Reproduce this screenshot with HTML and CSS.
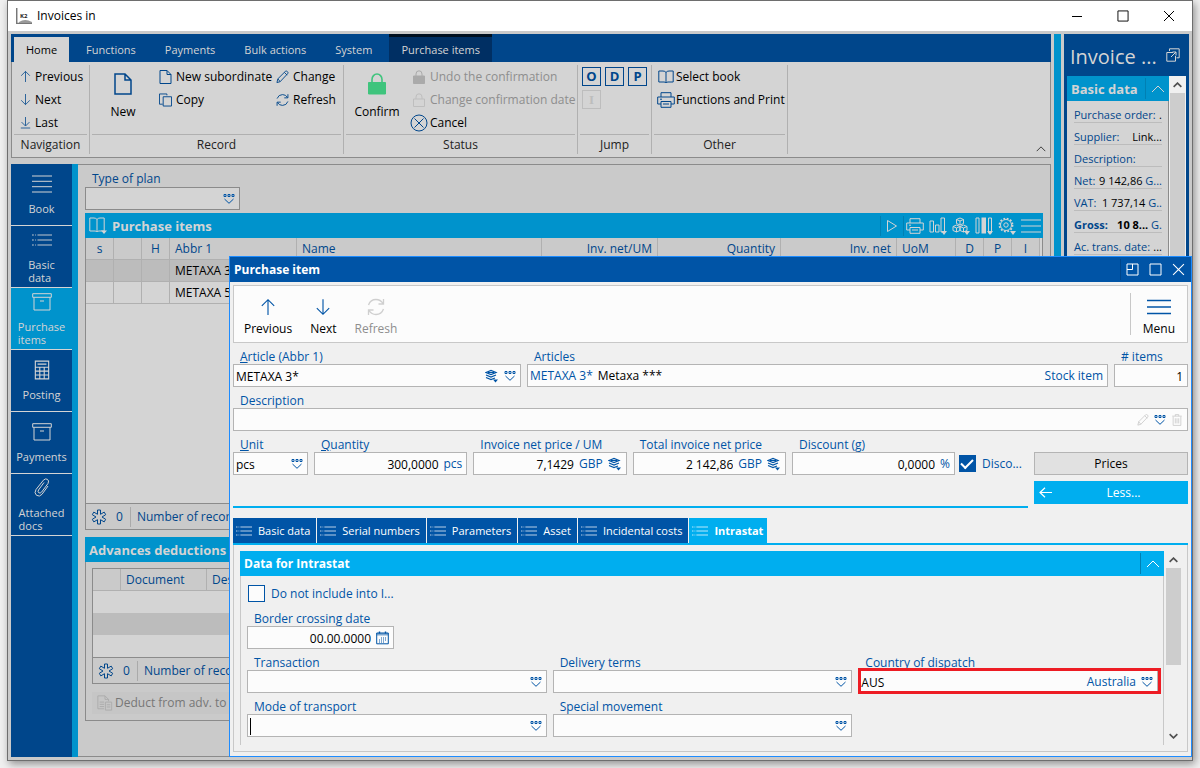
FILE: index.html
```html
<!DOCTYPE html>
<html lang="en">
<head>
<meta charset="utf-8">
<title>Invoices in</title>
<link rel="stylesheet" href="styles.css">
</head>
<body>
<svg class="sprite" aria-hidden="true">
  <symbol id="up" viewBox="0 0 14 16"><path d="M7 15V1.500M1.500 7 7 1.500 12.500 7"/></symbol>
  <symbol id="down" viewBox="0 0 14 16"><path d="M7 1v13.500M1.500 9 7 14.500 12.500 9"/></symbol>
  <symbol id="last" viewBox="0 0 14 16"><path d="M7 1v11M2 7.500l5 5 5-5M1 15h12"/></symbol>
  <symbol id="page" viewBox="0 0 18 22"><path d="M1 1h10l6 6v14H1zM11 1v6h6" stroke-width="1.500"/></symbol>
  <symbol id="pageS" viewBox="0 0 12 14"><path d="M.5.5h7l4 4v9H.5zM7.500.5v4h4"/></symbol>
  <symbol id="copy" viewBox="0 0 14 14"><path d="M4 11.500H.5V.5h8V2M4.500 3.500h9v10h-9z"/></symbol>
  <symbol id="pencil" viewBox="0 0 14 14"><path d="M1 13l1-4L10 1q1-1 2.300.2t.2 2.300L4.500 12zM2 9l2.500 3M9 2l3 3"/></symbol>
  <symbol id="refresh" viewBox="0 0 18 18"><path d="M1.500 7Q3.500 1.500 9 1.500q4.500 0 7 4M16.500 1v5h-5M16.500 11q-2 5.500-7.500 5.500-4.500 0-7-4M1.500 17v-5h5" stroke-width="1.300"/></symbol>
  <symbol id="lockBig" viewBox="0 0 18 22"><path d="M4 10V6.500a5 5.500 0 0 1 10 0V10" stroke-width="1.600"/><path class="fill" d="M.5 9.500h17V21H.5z"/></symbol>
  <symbol id="lock" viewBox="0 0 12 14"><path d="M3 6V4a3 3.200 0 0 1 6 0v2"/><path class="fill" d="M.5 6h11v7.500H.5z"/></symbol>
  <symbol id="lockO" viewBox="0 0 12 14"><path d="M3 6V4a3 3.200 0 0 1 6 0v2M.5 6h11v7.500H.5z"/></symbol>
  <symbol id="cancel" viewBox="0 0 18 18"><circle cx="9" cy="9" r="8"/><path d="M4.500 4.500l9 9M13.500 4.500l-9 9"/></symbol>
  <symbol id="book" viewBox="0 0 16 14"><path d="M8 2.500V13M8 2.500Q7 1 5 1H.8v11H6q1.500 0 2 1 .5-1 2-1h5.200V1H11Q9 1 8 2.500z"/></symbol>
  <symbol id="bookMenu" viewBox="0 0 18 17"><path d="M8 2.500V15M8 2.500Q7 1 5 1H.8v13H6q1.500 0 2 1 .5-1 2-1h5.200V1H11Q9 1 8 2.500z"/><path class="fill" d="M12 13.500h6l-3 3.500z" stroke="none"/></symbol>
  <symbol id="print" viewBox="0 0 18 16"><path d="M4 5V.7h10V5M4 12H.7V5h16.600v7H14M4 9.500h10v5.800H4zM6 12h6M3 7.200h2"/></symbol>
  <symbol id="drop" viewBox="0 0 12 12"><path d="M1 1.500h2v2H1zM5 1.500h2v2H5zM9 1.500h2v2H9zM1.500 6 6 10.300 10.500 6"/></symbol>
  <symbol id="layers" viewBox="0 0 14 13"><path d="M1 3l5-2 5 2-5 2zM1 5.500l5 2 5-2M1 8l5 2 4-1.500M3 3h6" stroke-width="1.200"/><path class="fill" d="M8 10h5l-2.500 3z" stroke="none"/></symbol>
  <symbol id="list" viewBox="0 0 22 14"><path d="M6 1.500h16M6 7h16M6 12.500h16M0 1.500h2M0 7h2M0 12.500h2M3.500 1.500h1M3.500 7h1M3.500 12.500h1"/></symbol>
  <symbol id="menu4" viewBox="0 0 20 18"><path d="M0 1h20M0 6.300h20M0 11.700h20M0 17h20"/></symbol>
  <symbol id="menu3" viewBox="0 0 20 14"><path d="M0 1h20M0 7h20M0 13h20"/></symbol>
  <symbol id="menuBig" viewBox="0 0 24 16"><path d="M0 1.500h24M0 8h24M0 14.500h24" stroke-width="1.400"/></symbol>
  <symbol id="box" viewBox="0 0 20 18"><path d="M.7.7h18.600v3.600H.7zM2 4.500V17h16V4.500M8 8h4"/></symbol>
  <symbol id="calc" viewBox="0 0 14 18"><path d="M1 1h12v16H1zM1 6.500h12M1 10h12M1 13.500h12M5 6.500V17M9 6.500V17M3 3.700h8"/></symbol>
  <symbol id="clip" viewBox="0 0 18 20"><path d="M11 4.500 5.500 12q-1 2 .3 2.800t2.700-.6l6.500-8.700q1.500-2.800-.6-4.200-2-1.200-4 .9L3 11.500q-2.200 3.500.5 5.800 3 2 5.500-1L15 8"/></symbol>
  <symbol id="star" viewBox="0 0 16 16"><path d="M6.500 1h3v4.300l3.700-2.200 1.500 2.600L11 8l3.700 2.300-1.500 2.600-3.700-2.200V15h-3v-4.300l-3.700 2.200-1.500-2.600L5 8 1.300 5.700l1.500-2.600 3.700 2.200z"/></symbol>
  <symbol id="play" viewBox="0 0 12 14"><path d="M1.500 1.500 10.500 7l-9 5.500z"/></symbol>
  <symbol id="bars" viewBox="0 0 18 18"><path d="M1 4h3.500v11H1zM6.500 8H10v7H6.500zM12 1h3.500v14H12z"/><path class="fill" d="M12 14h6l-3 4z" stroke="none"/></symbol>
  <symbol id="cubes" viewBox="0 0 18 18"><path d="M8 1l3.500 1.500v4L8 8 4.500 6.500v-4zM4.500 8 8 9.500v4L4.500 15 1 13.500v-4zM11.500 8 15 9.500v4L11.500 15 8 13.500v-4zM4.500 2.500 8 4l3.500-1.500M8 4v4M1 9.500 4.500 11 8 9.500 11.500 11 15 9.500M4.500 11v4M11.500 11v4"/><path class="fill" d="M12 14h6l-3 4z" stroke="none"/></symbol>
  <symbol id="columns" viewBox="0 0 18 18"><path d="M1 1h3v15H1zM13.500 1h3v15h-3z"/><path class="fill" d="M6.500 .5h4.500v16h-4.500zM12 14h6l-3 4z" stroke="none"/></symbol>
  <symbol id="gear" viewBox="0 0 18 18"><circle cx="8" cy="8" r="5.500"/><circle cx="8" cy="8" r="6.500" stroke-dasharray="1.800 1.600" stroke-width="1.800"/><circle cx="8" cy="8" r="2.200"/><path class="fill" d="M12 14h6l-3 4z" stroke="none"/></symbol>
  <symbol id="chev" viewBox="0 0 14 8"><path d="M1 7l6-6 6 6"/></symbol>
  <symbol id="ext" viewBox="0 0 14 14"><path d="M3.500 3V.8h9.700v9H10.500M7 4.500H.8v8.700h8.700V8M5 9l5-5M6.500 4H10v3.500"/></symbol>
  <symbol id="doc" viewBox="0 0 18 18"><path d="M8 15.500H1V1h8l4 4v2M9 1v4h4M3 8h5M3 10.500h5M3 13h5M9.500 8h7v9h-7zM11 11h4M11 13.500h4"/></symbol>
  <symbol id="trash" viewBox="0 0 12 14"><path d="M.5 2.500h11M4 2.500V.7h4v1.800M1.500 3v10.300h9V3M4 5v6M6 5v6M8 5v6"/></symbol>
  <symbol id="cal" viewBox="0 0 13 13"><path d="M.7 1.500h11.600v10.800H.7z"/><path class="fill soft" stroke="none" d="M.7 1.500h11.600v2.500H.7z"/><path d="M3.500 0v2M9.500 0v2" stroke-width="1.400"/><path d="M5 6.500h6M3 8.500h7M3 10.500h5" stroke-dasharray="1 1"/></symbol>
  <symbol id="left" viewBox="0 0 13 11"><path d="M13 5.500H1M6 .7 1 5.500l5 4.800" stroke-width="1.200"/></symbol>
  <symbol id="max" viewBox="0 0 13 13"><path d="M1 1h11v11H1z"/></symbol>
  <symbol id="dock" viewBox="0 0 13 13"><path d="M1 1h11v11H1zM6.500 1v5.500H1"/></symbol>
  <symbol id="x" viewBox="0 0 12 12"><path d="M1 1l10 10M11 1 1 11"/></symbol>
  <symbol id="min" viewBox="0 0 12 12"><path d="M1 6.500h10"/></symbol>
</svg>

<div class="window">
  <header class="titlebar">
    <svg class="logo" viewBox="0 0 16 16"><path d="M.7 0v15.500H16" fill="none" stroke="#777" stroke-width="1.500"/><path d="M3 14q6-4 13 0v1H3z" fill="#999" stroke="none"/><text x="4" y="10" class="logo-text">K2</text></svg>
    <span class="grow">Invoices in</span>
    <div class="win-buttons">
      <button aria-label="Minimize"><svg class="i12"><use href="#min"/></svg></button>
      <button aria-label="Maximize"><svg class="i12"><use href="#max"/></svg></button>
      <button aria-label="Close"><svg class="i12"><use href="#x"/></svg></button>
    </div>
  </header>

  <div class="frame">
    <div class="main">
      <section class="ribbon">
        <nav class="tabs">
          <button class="home">Home</button><button>Functions</button><button>Payments</button><button>Bulk actions</button><button>System</button><button class="context">Purchase items</button>
        </nav>
        <div class="groups">
          <div class="group nav-g">
            <div class="tools"><div class="col">
              <button><svg class="i11"><use href="#up"/></svg>Previous</button>
              <button><svg class="i11"><use href="#down"/></svg>Next</button>
              <button><svg class="i11"><use href="#last"/></svg>Last</button>
            </div></div>
            <div class="caption">Navigation</div>
          </div>
          <div class="group rec-g">
            <div class="tools">
              <button class="big"><svg class="i18"><use href="#page"/></svg>New</button>
              <div class="col sub">
                <button><svg class="i13"><use href="#pageS"/></svg>New subordinate</button>
                <button><svg class="i13"><use href="#copy"/></svg>Copy</button>
              </div>
              <div class="col">
                <button><svg class="i13"><use href="#pencil"/></svg>Change</button>
                <button><svg class="i13"><use href="#refresh"/></svg>Refresh</button>
              </div>
            </div>
            <div class="caption">Record</div>
          </div>
          <div class="group stat-g">
            <div class="tools">
              <button class="big green"><svg class="i18"><use href="#lockBig"/></svg>Confirm</button>
              <div class="col">
                <button disabled><svg class="i18s"><use href="#lock"/></svg>Undo the confirmation</button>
                <button disabled><svg class="i18s faint"><use href="#lockO"/></svg>Change confirmation date</button>
                <button><svg class="i18s full"><use href="#cancel"/></svg>Cancel</button>
              </div>
            </div>
            <div class="caption">Status</div>
          </div>
          <div class="group jump-g">
            <div class="tools letters"><button>O</button><button>D</button><button>P</button><button disabled class="serif">I</button></div>
            <div class="caption">Jump</div>
          </div>
          <div class="group other-g">
            <div class="tools"><div class="col">
              <button><svg class="i18s"><use href="#book"/></svg>Select book</button>
              <button><svg class="i18s full"><use href="#print"/></svg>Functions and Print</button>
            </div></div>
            <div class="caption">Other</div>
          </div>
          <button class="collapse" aria-label="Collapse ribbon"><svg><use href="#chev"/></svg></button>
        </div>
      </section>

      <div class="lower">
        <nav class="side">
          <button><svg><use href="#menu4"/></svg><span>Book</span></button>
          <button><svg><use href="#list"/></svg><span>Basic<br>data</span></button>
          <button class="on"><svg><use href="#box"/></svg><span>Purchase<br>items</span></button>
          <button><svg><use href="#calc"/></svg><span>Posting</span></button>
          <button><svg><use href="#box"/></svg><span>Payments</span></button>
          <button><svg><use href="#clip"/></svg><span>Attached<br>docs</span></button>
        </nav>
        <div class="content">
          <label class="plan-label" for="plan">Type of plan</label>
          <div class="field plan"><input id="plan" type="text"><button aria-label="Choose plan"><svg class="i12"><use href="#drop"/></svg></button></div>

          <section class="panel">
            <div class="bar">
              <svg class="bookico"><use href="#bookMenu"/></svg><h2>Purchase items</h2>
              <div class="bar-tools">
                <button aria-label="Run"><svg><use href="#play"/></svg></button>
                <button aria-label="Print"><svg><use href="#print"/></svg></button>
                <button aria-label="Chart"><svg><use href="#bars"/></svg></button>
                <button aria-label="Cubes"><svg><use href="#cubes"/></svg></button>
                <button aria-label="Columns"><svg><use href="#columns"/></svg></button>
                <button aria-label="Settings"><svg><use href="#gear"/></svg></button>
                <button aria-label="Menu"><svg><use href="#menu3"/></svg></button>
              </div>
            </div>
            <div class="grid-area">
              <table class="grid">
                <colgroup><col class="w28"><col class="w28"><col class="w28"><col class="w127"><col><col class="w116"><col class="w123"><col class="w116"><col class="w59"><col class="w28"><col class="w28"><col class="w28"></colgroup>
                <thead><tr><th class="c">s</th><th></th><th class="c">H</th><th>Abbr 1</th><th>Name</th><th class="r">Inv. net/UM</th><th class="r">Quantity</th><th class="r">Inv. net</th><th>UoM</th><th class="c">D</th><th class="c">P</th><th class="c">I</th></tr></thead>
                <tbody>
                  <tr class="sel"><td></td><td></td><td></td><td>METAXA 3*</td><td></td><td></td><td></td><td></td><td></td><td></td><td></td><td></td></tr>
                  <tr><td></td><td></td><td></td><td>METAXA 5*</td><td></td><td></td><td></td><td></td><td></td><td></td><td></td><td></td></tr>
                </tbody>
              </table>
            </div>
            <div class="status"><svg><use href="#star"/></svg><span class="num">0</span><span class="rest">Number of records: 2</span></div>
          </section>

          <section class="panel adv">
            <div class="bar"><h2>Advances deductions</h2></div>
            <div class="adv-body">
              <div class="adv-box">
                <table class="grid">
                  <colgroup><col class="w28"><col class="w86"><col></colgroup>
                  <thead><tr><th></th><th>Document</th><th>Description</th></tr></thead>
                  <tbody><tr><td colspan="3"></td></tr><tr class="sel"><td colspan="3"></td></tr><tr><td colspan="3"></td></tr></tbody>
                </table>
                <div class="status"><svg><use href="#star"/></svg><span class="num">0</span><span class="rest">Number of records: 0</span></div>
              </div>
              <button class="deduct" disabled><svg><use href="#doc"/></svg>Deduct from adv. to cover</button>
            </div>
          </section>
        </div>
      </div>
    </div>

    <div class="splitter"></div>

    <aside class="preview">
      <div class="preview-head"><h1>Invoice ...</h1><button aria-label="Open"><svg class="i14"><use href="#ext"/></svg></button></div>
      <div class="preview-body">
        <div class="preview-col">
          <div class="bar"><h2>Basic data</h2><button class="fold" aria-label="Collapse"><svg><use href="#chev"/></svg></button></div>
          <dl>
            <div><dt>Purchase order:</dt><dd>.</dd></div>
            <div><dt>Supplier:</dt><dd>Link...</dd></div>
            <div><dt>Description:</dt><dd></dd></div>
            <div><dt>Net:</dt><dd>9 142,86 <i>G...</i></dd></div>
            <div><dt>VAT:</dt><dd>1 737,14 <i>G..</i></dd></div>
            <div class="strong"><dt>Gross:</dt><dd>10 8... <i>G.</i></dd></div>
            <div><dt>Ac. trans. date:</dt><dd>...</dd></div>
          </dl>
        </div>
        <div class="scroll"><button aria-label="Scroll up"><svg><use href="#chev"/></svg></button><div class="thumb"></div></div>
      </div>
    </aside>
  </div>

  <div class="dialog" role="dialog" aria-labelledby="dlg">
    <div class="dlg-title"><h2 id="dlg">Purchase item</h2>
      <div class="dlg-buttons">
        <button aria-label="Dock"><svg class="i13q"><use href="#dock"/></svg></button>
        <button aria-label="Maximize"><svg class="i13q"><use href="#max"/></svg></button>
        <button aria-label="Close"><svg class="i13q"><use href="#x"/></svg></button>
      </div>
    </div>
    <div class="dlg-body">
      <div class="toolbar">
        <button class="tb"><svg><use href="#up"/></svg>Previous</button>
        <button class="tb"><svg><use href="#down"/></svg>Next</button>
        <button class="tb" disabled><svg><use href="#refresh"/></svg>Refresh</button>
        <button class="tb menu"><svg><use href="#menuBig"/></svg>Menu</button>
      </div>

      <div class="row">
        <div class="item w288"><label for="art"><u>A</u>rticle (Abbr 1)</label>
          <div class="field"><input id="art" value="METAXA 3*"><button aria-label="Details"><svg class="i14"><use href="#layers"/></svg></button><button aria-label="Choose"><svg class="i12"><use href="#drop"/></svg></button></div></div>
        <div class="item grow"><label for="arts">Articles</label>
          <output id="arts" class="field out"><span class="blue">METAXA 3*</span><span class="grow">Metaxa ***</span><span class="blue">Stock item</span></output></div>
        <div class="item w74"><label for="cnt"># items</label><div class="field"><input id="cnt" class="num-in" value="1"></div></div>
      </div>

      <div class="row">
        <div class="item grow"><label for="desc">Description</label>
          <div class="field"><input id="desc"><button disabled aria-label="Edit"><svg class="i12"><use href="#pencil"/></svg></button><button aria-label="Choose"><svg class="i12"><use href="#drop"/></svg></button><button disabled aria-label="Delete"><svg class="i12"><use href="#trash"/></svg></button></div></div>
      </div>

      <div class="row">
        <div class="row values">
          <div class="item w75"><label for="unit"><u>U</u>nit</label><div class="field"><input id="unit" value="pcs"><button aria-label="Choose"><svg class="i12"><use href="#drop"/></svg></button></div></div>
          <div class="item grow"><label for="qty"><u>Q</u>uantity</label><div class="field"><input id="qty" class="num-in" value="300,0000"><span class="blue">pcs</span></div></div>
          <div class="item grow"><label for="price">Invoice net price / UM</label><div class="field"><input id="price" class="num-in" value="7,1429"><span class="blue">GBP</span><button aria-label="Details"><svg class="i14"><use href="#layers"/></svg></button></div></div>
          <div class="item grow"><label for="total">Total invoice net price</label><div class="field"><input id="total" class="num-in" value="2 142,86"><span class="blue">GBP</span><button aria-label="Details"><svg class="i14"><use href="#layers"/></svg></button></div></div>
          <div class="item wide"><label for="disc">Discount (<u>g</u>)</label><div class="field"><input id="disc" class="num-in" value="0,0000"><span class="blue">%</span></div></div>
          <label class="check disc"><input type="checkbox" checked><span>Disco...</span></label>
        </div>
        <div class="side-buttons"><button>Prices</button><button class="less"><svg><use href="#left"/></svg><span>Less...</span></button></div>
      </div>

      <nav class="dtabs">
        <button><svg><use href="#list"/></svg>Basic data</button>
        <button><svg><use href="#list"/></svg>Serial numbers</button>
        <button><svg><use href="#list"/></svg>Parameters</button>
        <button><svg><use href="#list"/></svg>Asset</button>
        <button><svg><use href="#list"/></svg>Incidental costs</button>
        <button class="on"><svg><use href="#list"/></svg>Intrastat</button>
      </nav>
      <div class="tabpage">
        <section class="intra">
          <div class="bar"><h2>Data for Intrastat</h2><button class="fold" aria-label="Collapse"><svg><use href="#chev"/></svg></button></div>
          <div class="intra-body">
            <label class="check"><input type="checkbox"><span>Do not include into I...</span></label>
            <div class="item w147"><label for="date">Border crossing date</label><div class="field"><input id="date" class="num-in" value="00.00.0000"><button aria-label="Calendar"><svg class="i13"><use href="#cal"/></svg></button></div></div>
            <div class="three">
              <div class="item"><label for="tr">Transaction</label><div class="field"><input id="tr"><button aria-label="Choose"><svg class="i12"><use href="#drop"/></svg></button></div></div>
              <div class="item"><label for="dt">Delivery terms</label><div class="field"><input id="dt"><button aria-label="Choose"><svg class="i12"><use href="#drop"/></svg></button></div></div>
              <div class="item"><label for="cd">Country of dispatch</label><div class="field marked"><input id="cd" value="AUS"><span class="blue">Australia</span><button aria-label="Choose"><svg class="i12"><use href="#drop"/></svg></button></div></div>
              <div class="item"><label for="mt">Mode of transport</label><div class="field caret"><input id="mt"><button aria-label="Choose"><svg class="i12"><use href="#drop"/></svg></button></div></div>
              <div class="item"><label for="sm">Special movement</label><div class="field"><input id="sm"><button aria-label="Choose"><svg class="i12"><use href="#drop"/></svg></button></div></div>
            </div>
          </div>
        </section>
        <div class="scroll light"><button aria-label="Scroll up"><svg><use href="#chev"/></svg></button><div class="thumb"></div><button class="dn" aria-label="Scroll down"><svg><use href="#chev"/></svg></button></div>
      </div>
    </div>
  </div>
</div>
</body>
</html>
```
FILE: styles.css
```css
* { box-sizing: border-box; }
body {
  margin: 0; min-height: 100vh; padding: 0 7px 7px; display: flex;
  background: #f0f0f0; color: #000;
  font: 12px/16px "Open Sans", "Noto Sans", sans-serif;
}
button, input { font: inherit; color: inherit; margin: 0; padding: 0; border: 0; background: none; }
h1, h2, dl, dd { margin: 0; font: inherit; }
button { white-space: nowrap; }
svg { fill: none; stroke: currentColor; flex: none; display: block; }
.fill { fill: currentColor; }
.soft { opacity: .5; }
.sprite { position: absolute; width: 0; height: 0; }
.grow { flex: 1; }
.blue { color: #0054a6; }
.i11 { width: 11px; height: 13px; }
.i12 { width: 12px; height: 12px; }
.i13 { width: 13px; height: 14px; }
.i13q { width: 13px; height: 13px; }
.i14 { width: 14px; height: 14px; }
.i18 { width: 18px; height: 22px; }
.i18s { width: 18px; height: 14px; }
.i18s.full { height: 18px; }
.faint { opacity: .5; }

.window {
  position: relative; flex: 1; min-width: 0; display: flex; flex-direction: column;
  border: 1px solid #6e6e6e; background: #cacaca; box-shadow: 2px 3px 8px #00000066;
}
.titlebar { display: flex; align-items: center; gap: 5px; height: 30px; padding-left: 8px; background: #fff; }
.logo { width: 16px; height: 16px; }
.logo-text { font: bold 6px "Open Sans", sans-serif; fill: #222; stroke: none; }
.win-buttons { display: flex; }
.win-buttons button { width: 46px; height: 30px; display: grid; place-items: center; }
.frame { flex: 1; display: flex; gap: 3px; padding: 3px 3px 3px; }
.main { flex: 1; min-width: 0; display: flex; flex-direction: column; gap: 6px; }
.splitter { width: 7px; background: #0093cc; }

/* ribbon */
.tabs { display: flex; gap: 5px; height: 28px; padding-left: 3px; background: #00468b; color: #d4d4d4; }
.tabs button { padding: 4px 12px 0; font-size: 11px; }
.tabs .home { background: #d4d4d4; color: #000; margin-top: 3px; padding-top: 0; }
.tabs .context { background: #002f63; border-top: 3px solid #001020; padding-top: 1px; }
.groups { position: relative; display: flex; height: 96px; padding-top: 3px; background: #d4d4d4; border: 1px solid #8b8b8b; border-top: 0; }
.group { display: flex; flex-direction: column; padding: 0 2px; margin-bottom: 3px; border-right: 1px solid #b0b0b0; }
.nav-g { width: 78px; }
.rec-g { width: 254px; }
.stat-g { width: 234px; }
.jump-g { width: 74px; }
.other-g { width: 136px; }
.tools { display: flex; height: 70px; border-bottom: 1px solid #b0b0b0; }
.caption { text-align: center; padding-top: 1px; line-height: 18px; color: #222; }
.col { display: flex; flex-direction: column; flex: none; }
.col button { display: flex; align-items: center; gap: 5px; height: 23px; text-align: left; }
.col svg, .letters button { color: #00468b; }
.nav-g .col { padding-left: 6px; }
.nav-g .col button { gap: 4px; }
.rec-g .big { width: 62px; }
.rec-g .sub { width: 122px; padding-left: 5px; }
.rec-g .col button { gap: 4px; }
.stat-g .big { width: 62px; }
.stat-g .col button, .other-g .col button { gap: 2px; }
.stat-g .col { padding-left: 2px; }
.other-g .col { padding-left: 3px; }
.other-g .col button { gap: 1px; }
.big { display: flex; flex-direction: column; align-items: center; gap: 9px; padding-top: 8px; flex: none; }
.big svg { color: #00468b; }
.green svg { color: #3fc47d; }
.tools button:disabled { color: #8e8e8e; }
.tools button:disabled svg { color: #aaa; }
.letters { flex-wrap: wrap; gap: 4px; align-content: flex-start; padding: 2px; }
.letters button { width: 19px; height: 19px; border: 1px solid #00468b; font-weight: bold; font-size: 13px; line-height: 17px; }
.letters button:disabled { border-color: #bdbdbd; color: #bdbdbd; }
.serif { font-family: "Liberation Serif", serif; }
.collapse { position: absolute; right: 4px; bottom: 4px; }
.collapse svg { width: 10px; height: 8px; }

/* left navigation */
.lower { flex: 1; display: flex; }
.side { width: 67px; background: #00468b; border-right: 6px solid #0093cc; color: #d4d4d4; }
.side button { width: 100%; height: 62px; display: flex; flex-direction: column; align-items: center; justify-content: center; gap: 8px; border-bottom: 1px solid #d4d4d4; text-align: left; font-size: 11px; line-height: 13px; }
.side svg { width: 20px; height: 20px; }
.side .on { background: #0093cc; }

.content { flex: 1; min-width: 0; padding: 6px 7px 35px; border: solid #8b8b8b; border-width: 1px 1px 1px 0; display: flex; flex-direction: column; }
.plan-label { padding-left: 7px; color: #00468b; }
.field { position: relative; display: flex; align-items: center; gap: 5px; height: 23px; padding: 1px 4px 0 2px; background: #fcfcfc; border: 1px solid #b4b4b4; }
.field input { flex: 1; min-width: 0; width: 0; height: 20px; outline: 0; }
.field button { color: #0054a6; }
.field button:disabled { color: #ccc; }
.num-in { text-align: right; }
.plan { width: 155px; background: #d4d4d4; border-color: #8b8b8b; margin-bottom: 3px; }
.bar { display: flex; align-items: center; height: 25px; padding-left: 4px; background: #0093cc; color: #d4d4d4; }
.bar h2, .dlg-title h2 { flex: 1; font-size: 13px; font-weight: bold; white-space: nowrap; }
.bar h2 { font-size: 12px; }
.panel { flex: 1; display: flex; flex-direction: column; border: 1px solid #8b8b8b; border-top: 0; }
.panel .bar { margin: 0 -1px; padding-left: 4px; }
.panel .bar h2, .preview .bar h2 { font-size: 13px; }
.bookico { width: 18px; height: 17px; margin-right: 5px; }
.bar-tools { display: flex; gap: 5px; padding-right: 2px; align-items: center; }
.bar-tools svg { width: 18px; height: 18px; }
.bar-tools button:first-child { border-left: 1px solid #0080b3; border-right: 1px solid #0080b3; margin-right: -3px; padding: 3px 2px; }
.bar-tools button:first-child svg { height: 14px; }
.bar-tools button:last-child svg { width: 20px; height: 14px; }
.grid-area { flex: 1; padding-right: 2px; background: #d4d4d4; }
.grid { width: 100%; table-layout: fixed; border-collapse: separate; border-spacing: 0; }
.grid th { height: 22px; padding: 0 5px; font-weight: normal; text-align: left; color: #00468b; background: #cacaca; border-right: 1px solid #b0b0b0; border-bottom: 1px solid #b0b0b0; }
.grid td { height: 22px; padding: 0 5px; background: #d4d4d4; border-right: 1px solid #b0b0b0; border-bottom: 1px solid #b0b0b0; white-space: nowrap; }
.grid .sel td { background: #bcbcbc; }
.grid .c { text-align: center; }
.grid .r { text-align: right; }
.w28 { width: 28px; } .w127 { width: 127px; } .w116 { width: 116px; } .w123 { width: 123px; } .w59 { width: 59px; } .w86 { width: 86px; }
.status { display: flex; align-items: center; height: 26px; padding-left: 5px; border-top: 1px solid #8b8b8b; color: #00468b; }
.status svg { width: 16px; height: 16px; }
.num { padding: 2px 7px 2px 9px; border-right: 1px solid #aaa; }
.rest { padding-left: 6px; }
.adv { flex: none; margin-top: 7px; }
.adv-body { padding: 6px; }
.adv-box { border: 1px solid #8b8b8b; }
.adv-box .grid td { border: 0; }
.deduct { display: flex; align-items: center; gap: 2px; margin-top: 8px; padding-left: 5px; height: 22px; color: #777; background: #c6c6c6; }
.deduct svg { width: 16px; height: 18px; color: #aaa; }

/* preview */
.preview { width: 125px; display: flex; flex-direction: column; padding: 0 3px; background: #00468b; }
.preview-head { display: flex; justify-content: space-between; height: 42px; padding: 0 6px 0 3px; color: #d4d4d4; }
.preview-head h1 { font-size: 20px; line-height: 46px; }
.preview-body { flex: 1; display: flex; }
.preview-col { flex: 1; min-width: 0; background: #d4d4d4; border-right: 1px solid #8b8b8b; }
.preview-col .bar { margin-right: -1px; }
.fold { display: grid; place-items: center; width: 24px; height: 21px; border-left: 1px solid #0080b3; }
.fold svg { width: 14px; height: 8px; }
.preview dl { padding: 0 6px 0 7px; color: #00468b; font-size: 11px; }
.preview dl div { display: flex; justify-content: space-between; height: 22px; padding-top: 6px; line-height: 15px; border-bottom: 1px solid #bcbcbc; white-space: nowrap; }
.preview dd { color: #000; }
.preview i { font-style: normal; font-weight: normal; color: #00468b; }
.strong { font-weight: bold; }
.scroll { width: 17px; display: flex; flex-direction: column; background: #f0f0f0; }
.scroll button { height: 17px; display: grid; place-items: center; color: #505050; }
.scroll svg { width: 9px; height: 6px; stroke-width: 2.500; }
.scroll .thumb { flex: 1; margin: 0 1px; background: #cdcdcd; }

/* dialog */
.dialog { position: absolute; left: 221px; top: 255px; right: 0; bottom: 3px; display: flex; flex-direction: column; background: #f0f0f0; border: 1px solid #1e8cff; }
.dlg-title { display: flex; align-items: center; height: 25px; padding-left: 4px; background: #0054a6; color: #fff; }
.dlg-title h2 { font-size: 12px; }
.dlg-buttons { display: flex; gap: 10px; padding: 4px 6px 4px 5px; border-left: 1px solid #00468b; }
.dlg-body { flex: 1; min-height: 0; display: flex; flex-direction: column; padding: 3px 3px 4px; }
.toolbar { display: flex; height: 58px; padding: 0 10px; background: #fcfcfc; border: 1px solid #c8c8c8; }
.tb { display: flex; flex-direction: column; align-items: center; gap: 5px; padding-top: 12px; margin-right: 18px; }
.tb svg { width: 18px; height: 18px; color: #0054a6; }
.tb:disabled, .tb:disabled svg { color: #8e8e8e; }
.tb:disabled svg { opacity: .4; }
.menu { margin: 7px 0 7px auto; padding: 5px 2px 0 12px; border-left: 1px solid #c8c8c8; }
.toolbar .menu svg { width: 24px; }
.row { display: flex; gap: 6px; }
.item label { display: block; height: 21px; padding: 6px 0 0 7px; line-height: 15px; color: #0054a6; white-space: nowrap; }
.item { min-width: 0; }
.item.grow { flex: 1 1 0; }
.w288 { width: 288px; } .w74 { width: 74px; } .w75 { width: 75px; } .w147 { width: 147px; }
.wide { width: 163px; }
.out { gap: 5px; }
.values { flex: 1; height: 77px; border-bottom: 2px solid #00aeef; }
.check { display: flex; align-items: center; gap: 6px; color: #0054a6; white-space: nowrap; }
.check input { appearance: none; width: 17px; height: 17px; border: 1px solid #0054a6; background: #fcfcfc; display: grid; place-items: center; }
.check input:checked { background: #0054a6; }
.check input:checked::after { content: ""; width: 10px; height: 5px; margin-top: -3px; border: solid #fff; border-width: 0 0 2px 2px; transform: rotate(-45deg); }
.disc { width: 69px; height: 17px; margin: 24px 0 0 -2px; }
.side-buttons { width: 154px; padding-top: 21px; display: flex; flex-direction: column; gap: 6px; }
.side-buttons button { height: 23px; background: #e1e1e1; border: 1px solid #b4b4b4; }
.side-buttons .less { display: flex; align-items: center; padding: 0 4px; background: #00aeef; border-color: #00aeef; color: #fff; }
.less svg { width: 13px; height: 11px; }
.less span { flex: 1; padding-left: 12px; }
.dtabs { display: flex; gap: 1px; margin-top: 10px; background: #f0f0f0; border-bottom: 2px solid #00aeef; }
.dtabs button { display: flex; align-items: center; gap: 6px; height: 25px; padding: 0 6px 0 3px; background: #0054a6; color: #fff; font-size: 11px; }
.dtabs svg { width: 16px; height: 12px; }
.dtabs .on { background: #00aeef; font-weight: bold; padding-right: 4px; }
.tabpage { flex: 1; min-height: 0; display: flex; gap: 1px; padding: 6px 5px 6px 6px; border: 1px solid #c8c8c8; border-top: 0; }
.intra { flex: 1; display: flex; flex-direction: column; }
.intra .bar { background: #00aeef; color: #fff; }
.intra-body { flex: 1; padding: 9px 5px 0 6px; border: solid #c8c8c8; border-width: 0 1px; }
.intra .check { height: 17px; padding-left: 1px; }
.three { display: grid; grid-template-columns: repeat(3, 1fr); column-gap: 6px; }
.intra-body > .item { padding-top: 3px; }
.marked::after { content: ""; position: absolute; inset: -3px -4px -2px -1px; border: 3px solid #ed1c24; pointer-events: none; }
.caret::before { content: ""; width: 1px; height: 17px; background: #000; margin-right: -6px; }
.light .thumb { flex: none; height: 97px; }
.dn { margin-top: auto; transform: rotate(180deg); }
```
